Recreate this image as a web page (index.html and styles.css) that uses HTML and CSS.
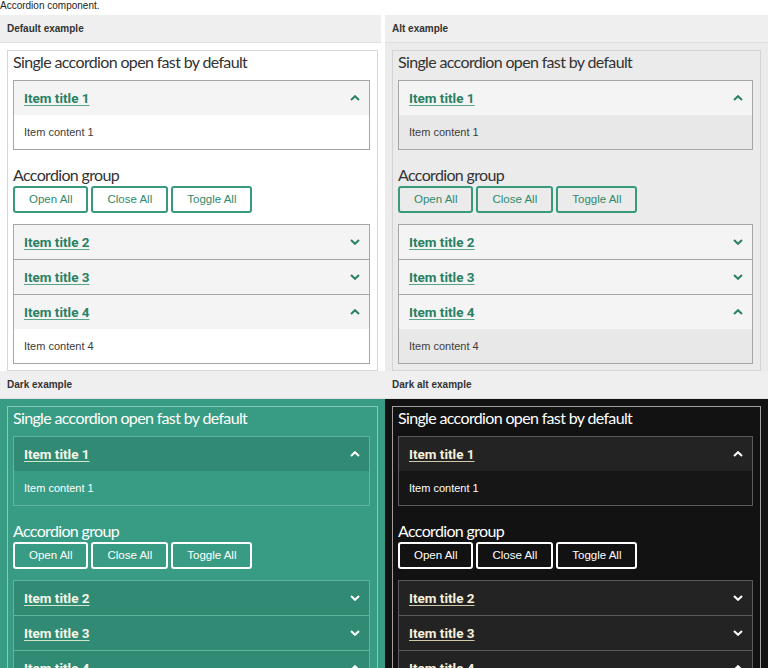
FILE: index.html
```html
<!DOCTYPE html>
<html lang="en">
<head>
<meta charset="utf-8">
<title>Accordion component</title>
<link rel="stylesheet" href="styles.css">
</head>
<body>
<p class="intro">Accordion component.</p>
<div class="grid">

  <section class="example theme-default">
    <h3 class="ex-label">Default example</h3>
    <div class="ex-body">
      <div class="demo">
        <h2 class="demo-title">Single accordion open fast by default</h2>
        <div class="accordion">
          <div class="acc-item">
            <div class="acc-head"><a class="acc-title" href="#">Item title 1</a><svg class="chev" viewBox="0 0 10 6"><path d="M1 5L5 1.2L9 5"/></svg></div>
            <div class="acc-content">Item content 1</div>
          </div>
        </div>
        <h2 class="demo-title group-title">Accordion group</h2>
        <div class="btns"><button class="btn">Open All</button><button class="btn">Close All</button><button class="btn">Toggle All</button></div>
        <div class="accordion">
          <div class="acc-item">
            <div class="acc-head"><a class="acc-title" href="#">Item title 2</a><svg class="chev" viewBox="0 0 10 6"><path d="M1 1L5 4.8L9 1"/></svg></div>
          </div>
          <div class="acc-item">
            <div class="acc-head"><a class="acc-title" href="#">Item title 3</a><svg class="chev" viewBox="0 0 10 6"><path d="M1 1L5 4.8L9 1"/></svg></div>
          </div>
          <div class="acc-item">
            <div class="acc-head"><a class="acc-title" href="#">Item title 4</a><svg class="chev" viewBox="0 0 10 6"><path d="M1 5L5 1.2L9 5"/></svg></div>
            <div class="acc-content">Item content 4</div>
          </div>
        </div>
      </div>
    </div>
  </section>

  <section class="example theme-alt">
    <h3 class="ex-label">Alt example</h3>
    <div class="ex-body">
      <div class="demo">
        <h2 class="demo-title">Single accordion open fast by default</h2>
        <div class="accordion">
          <div class="acc-item">
            <div class="acc-head"><a class="acc-title" href="#">Item title 1</a><svg class="chev" viewBox="0 0 10 6"><path d="M1 5L5 1.2L9 5"/></svg></div>
            <div class="acc-content">Item content 1</div>
          </div>
        </div>
        <h2 class="demo-title group-title">Accordion group</h2>
        <div class="btns"><button class="btn">Open All</button><button class="btn">Close All</button><button class="btn">Toggle All</button></div>
        <div class="accordion">
          <div class="acc-item">
            <div class="acc-head"><a class="acc-title" href="#">Item title 2</a><svg class="chev" viewBox="0 0 10 6"><path d="M1 1L5 4.8L9 1"/></svg></div>
          </div>
          <div class="acc-item">
            <div class="acc-head"><a class="acc-title" href="#">Item title 3</a><svg class="chev" viewBox="0 0 10 6"><path d="M1 1L5 4.8L9 1"/></svg></div>
          </div>
          <div class="acc-item">
            <div class="acc-head"><a class="acc-title" href="#">Item title 4</a><svg class="chev" viewBox="0 0 10 6"><path d="M1 5L5 1.2L9 5"/></svg></div>
            <div class="acc-content">Item content 4</div>
          </div>
        </div>
      </div>
    </div>
  </section>

  <section class="example theme-dark">
    <h3 class="ex-label">Dark example</h3>
    <div class="ex-body">
      <div class="demo">
        <h2 class="demo-title">Single accordion open fast by default</h2>
        <div class="accordion">
          <div class="acc-item">
            <div class="acc-head"><a class="acc-title" href="#">Item title 1</a><svg class="chev" viewBox="0 0 10 6"><path d="M1 5L5 1.2L9 5"/></svg></div>
            <div class="acc-content">Item content 1</div>
          </div>
        </div>
        <h2 class="demo-title group-title">Accordion group</h2>
        <div class="btns"><button class="btn">Open All</button><button class="btn">Close All</button><button class="btn">Toggle All</button></div>
        <div class="accordion">
          <div class="acc-item">
            <div class="acc-head"><a class="acc-title" href="#">Item title 2</a><svg class="chev" viewBox="0 0 10 6"><path d="M1 1L5 4.8L9 1"/></svg></div>
          </div>
          <div class="acc-item">
            <div class="acc-head"><a class="acc-title" href="#">Item title 3</a><svg class="chev" viewBox="0 0 10 6"><path d="M1 1L5 4.8L9 1"/></svg></div>
          </div>
          <div class="acc-item">
            <div class="acc-head"><a class="acc-title" href="#">Item title 4</a><svg class="chev" viewBox="0 0 10 6"><path d="M1 5L5 1.2L9 5"/></svg></div>
            <div class="acc-content">Item content 4</div>
          </div>
        </div>
      </div>
    </div>
  </section>

  <section class="example theme-darkalt">
    <h3 class="ex-label">Dark alt example</h3>
    <div class="ex-body">
      <div class="demo">
        <h2 class="demo-title">Single accordion open fast by default</h2>
        <div class="accordion">
          <div class="acc-item">
            <div class="acc-head"><a class="acc-title" href="#">Item title 1</a><svg class="chev" viewBox="0 0 10 6"><path d="M1 5L5 1.2L9 5"/></svg></div>
            <div class="acc-content">Item content 1</div>
          </div>
        </div>
        <h2 class="demo-title group-title">Accordion group</h2>
        <div class="btns"><button class="btn">Open All</button><button class="btn">Close All</button><button class="btn">Toggle All</button></div>
        <div class="accordion">
          <div class="acc-item">
            <div class="acc-head"><a class="acc-title" href="#">Item title 2</a><svg class="chev" viewBox="0 0 10 6"><path d="M1 1L5 4.8L9 1"/></svg></div>
          </div>
          <div class="acc-item">
            <div class="acc-head"><a class="acc-title" href="#">Item title 3</a><svg class="chev" viewBox="0 0 10 6"><path d="M1 1L5 4.8L9 1"/></svg></div>
          </div>
          <div class="acc-item">
            <div class="acc-head"><a class="acc-title" href="#">Item title 4</a><svg class="chev" viewBox="0 0 10 6"><path d="M1 5L5 1.2L9 5"/></svg></div>
            <div class="acc-content">Item content 4</div>
          </div>
        </div>
      </div>
    </div>
  </section>

</div>
</body>
</html>
```

FILE: styles.css
```css
* { box-sizing: border-box; }

html, body {
  margin: 0;
  padding: 0;
  background: #fff;
  font-family: "Liberation Sans", Arial, sans-serif;
  color: #222;
}

.intro {
  margin: 0;
  height: 15px;
  font-size: 10px;
  line-height: 11px;
  color: #222;
}

.grid {
  display: grid;
  grid-template-columns: 385px 383px;
}

.example {
  background: var(--cell-bg);
}

.ex-label {
  margin: 0;
  height: 28px;
  padding-left: 7px;
  background: #efefef;
  border-bottom: 1px solid #e0e0e0;
  font-size: 10px;
  font-weight: bold;
  line-height: 27px;
  color: #333;
}

.theme-default .ex-label { margin-right: 4px; }

.ex-body {
  padding: 7px 7px 0 7px;
}

.demo {
  border: 1px solid var(--demo-border);
  padding: 0 7px 6px 5px;
}

.demo-title {
  margin: 0 0 7px 0;
  font-family: Lato, "Liberation Sans", sans-serif;
  font-weight: normal;
  font-size: 16px;
  letter-spacing: -0.65px;
  line-height: 22px;
  color: var(--heading);
}

.group-title {
  margin: 14px 0 0 0;
}

.btns {
  display: flex;
  gap: 3px;
  margin-bottom: 11px;
}

.btn {
  height: 27px;
  padding: 0 14px;
  border: 2px solid var(--btn-border);
  border-radius: 3px;
  background: var(--btn-bg);
  color: var(--btn-text);
  font-family: "Liberation Sans", Arial, sans-serif;
  font-size: 11.5px;
  line-height: 23px;
}

.accordion {
  border: 1px solid var(--acc-border);
}

.acc-item + .acc-item {
  border-top: 1px solid var(--acc-border);
}

.acc-head {
  display: flex;
  align-items: center;
  justify-content: space-between;
  height: 34px;
  padding: 0 9px 0 10px;
  background: var(--head-bg);
}

.acc-title {
  font-family: Roboto, "Liberation Sans", sans-serif;
  font-weight: bold;
  font-size: 13.5px;
  color: var(--title);
  text-decoration: underline;
  text-decoration-color: var(--underline);
  text-decoration-thickness: 1px;
  text-underline-offset: 2px;
}

.chev {
  width: 10px;
  height: 6px;
  fill: none;
  stroke: var(--chev);
  stroke-width: 2;
}

.acc-content {
  height: 34px;
  padding-left: 10px;
  display: flex;
  align-items: center;
  background: var(--content-bg);
  font-size: 11px;
  color: var(--content-text);
}

/* themes */
.theme-default {
  --cell-bg: #ffffff;
  --demo-border: #d6d6d6;
  --heading: #333333;
  --acc-border: #a6a6a6;
  --head-bg: #f4f4f4;
  --content-bg: #ffffff;
  --content-text: #3c3c3c;
  --title: #2a8062;
  --underline: #5aa58a;
  --chev: #2a8062;
  --btn-bg: #ffffff;
  --btn-border: #379a7c;
  --btn-text: #2f8a6c;
}

.theme-alt {
  --cell-bg: #ebebeb;
  --demo-border: #d4d4d4;
  --heading: #333333;
  --acc-border: #a6a6a6;
  --head-bg: #f4f4f4;
  --content-bg: #e8e8e8;
  --content-text: #3c3c3c;
  --title: #2a8062;
  --underline: #5aa58a;
  --chev: #2a8062;
  --btn-bg: #ebebeb;
  --btn-border: #379a7c;
  --btn-text: #2f8a6c;
}

.theme-dark {
  --cell-bg: #389c84;
  --demo-border: #86cab8;
  --heading: #ffffff;
  --acc-border: #5fb59e;
  --head-bg: #318a73;
  --content-bg: #389c84;
  --content-text: #ffffff;
  --title: #f6f6ea;
  --underline: #cfe6c8;
  --chev: #ffffff;
  --btn-bg: #389c84;
  --btn-border: #ffffff;
  --btn-text: #ffffff;
}

.theme-darkalt {
  --cell-bg: #121212;
  --demo-border: #a0a0a0;
  --heading: #ffffff;
  --acc-border: #5a5a5a;
  --head-bg: #232323;
  --content-bg: #161616;
  --content-text: #ffffff;
  --title: #f4f0dc;
  --underline: #cfc9a8;
  --chev: #ffffff;
  --btn-bg: #121212;
  --btn-border: #ffffff;
  --btn-text: #ffffff;
}
```
